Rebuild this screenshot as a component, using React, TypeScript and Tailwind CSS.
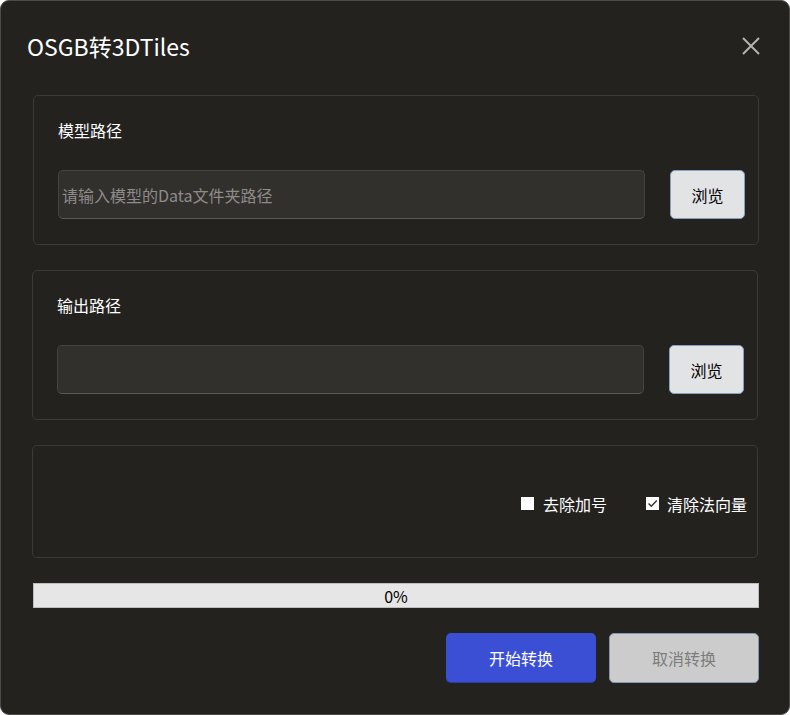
import React from "react";

const font = { fontFamily: '"Microsoft YaHei", "Noto Sans CJK SC", "Noto Sans", sans-serif' };

function PathPanel({ label, placeholder, shift }: { label: string; placeholder?: string; shift: string }) {
  return (
    <div className={`${shift} h-[150px] rounded-[5px] border border-[#3b3a37] pl-[24px] pr-[13px] pt-[24px]`}>
      <div className="text-[16px] leading-[20px] text-white">{label}</div>
      <div className="mt-[30px] flex items-center gap-[25px]">
        <div className="flex h-[49px] flex-1 items-center rounded-[5px] border border-[#45433f] border-b-[#5c5a56] bg-[#32302d] pl-[3px] text-[16px] text-[#8e8c89]">
          {placeholder}
        </div>
        <button className="h-[49px] w-[75px] rounded-[5px] border border-[#86a0c2] bg-[#e1e3e5] text-[16px] text-black">
          浏览
        </button>
      </div>
    </div>
  );
}

export default function App() {
  return (
    <div
      style={font}
      className="flex h-[715px] w-[790px] flex-col overflow-hidden rounded-[9px] border border-[#4d4c49] bg-[#23221f]"
    >
      <div className="flex h-[89px] items-center justify-between pl-[26px] pr-[28px]">
        <div className="text-[23px] leading-[28px] text-white">OSGB转3DTiles</div>
        <svg width="20" height="20" viewBox="0 0 20 20">
          <path d="M2 2 L18 18 M18 2 L2 18" stroke="#b4b4b4" strokeWidth="2" fill="none" />
        </svg>
      </div>
      <div className="mt-[5px] flex flex-col pl-[31px] pr-[30px]">
        <PathPanel label="模型路径" placeholder="请输入模型的Data文件夹路径" shift="ml-[1px]" />
        <PathPanel label="输出路径" shift="mt-[25px] mr-[1px]" />
        <div className="mt-[25px] mr-[1px] flex h-[113px] items-center justify-end rounded-[5px] border border-[#3b3a37] pr-[10px] pt-[4px]">
          <label className="flex items-center gap-[9px] text-[16px] text-white">
            <span className="h-[13px] w-[13px] bg-white" />
            去除加号
          </label>
          <label className="ml-[39px] flex items-center gap-[8px] text-[16px] text-white">
            <span className="flex h-[13px] w-[13px] items-center justify-center bg-white">
              <svg width="11" height="11" viewBox="0 0 11 11">
                <path d="M1.5 5.5 L4.3 8.3 L9.8 2.5" stroke="#333" strokeWidth="1.4" fill="none" />
              </svg>
            </span>
            清除法向量
          </label>
        </div>
        <div className="ml-[1px] mt-[25px] flex h-[25px] items-center justify-center border border-[#bdbdbd] bg-[#e6e6e6] text-[16px] text-black">
          0%
        </div>
        <div className="mt-[25px] flex justify-end gap-[13px]">
          <button className="h-[50px] w-[150px] rounded-[5px] border-b border-[#2c3ca8] bg-[#3b4fd5] text-[16px] text-white">
            开始转换
          </button>
          <button className="h-[50px] w-[150px] rounded-[5px] border border-[#8398b4] bg-[#cccccc] text-[16px] text-[#7c7c7c]">
            取消转换
          </button>
        </div>
      </div>
    </div>
  );
}
